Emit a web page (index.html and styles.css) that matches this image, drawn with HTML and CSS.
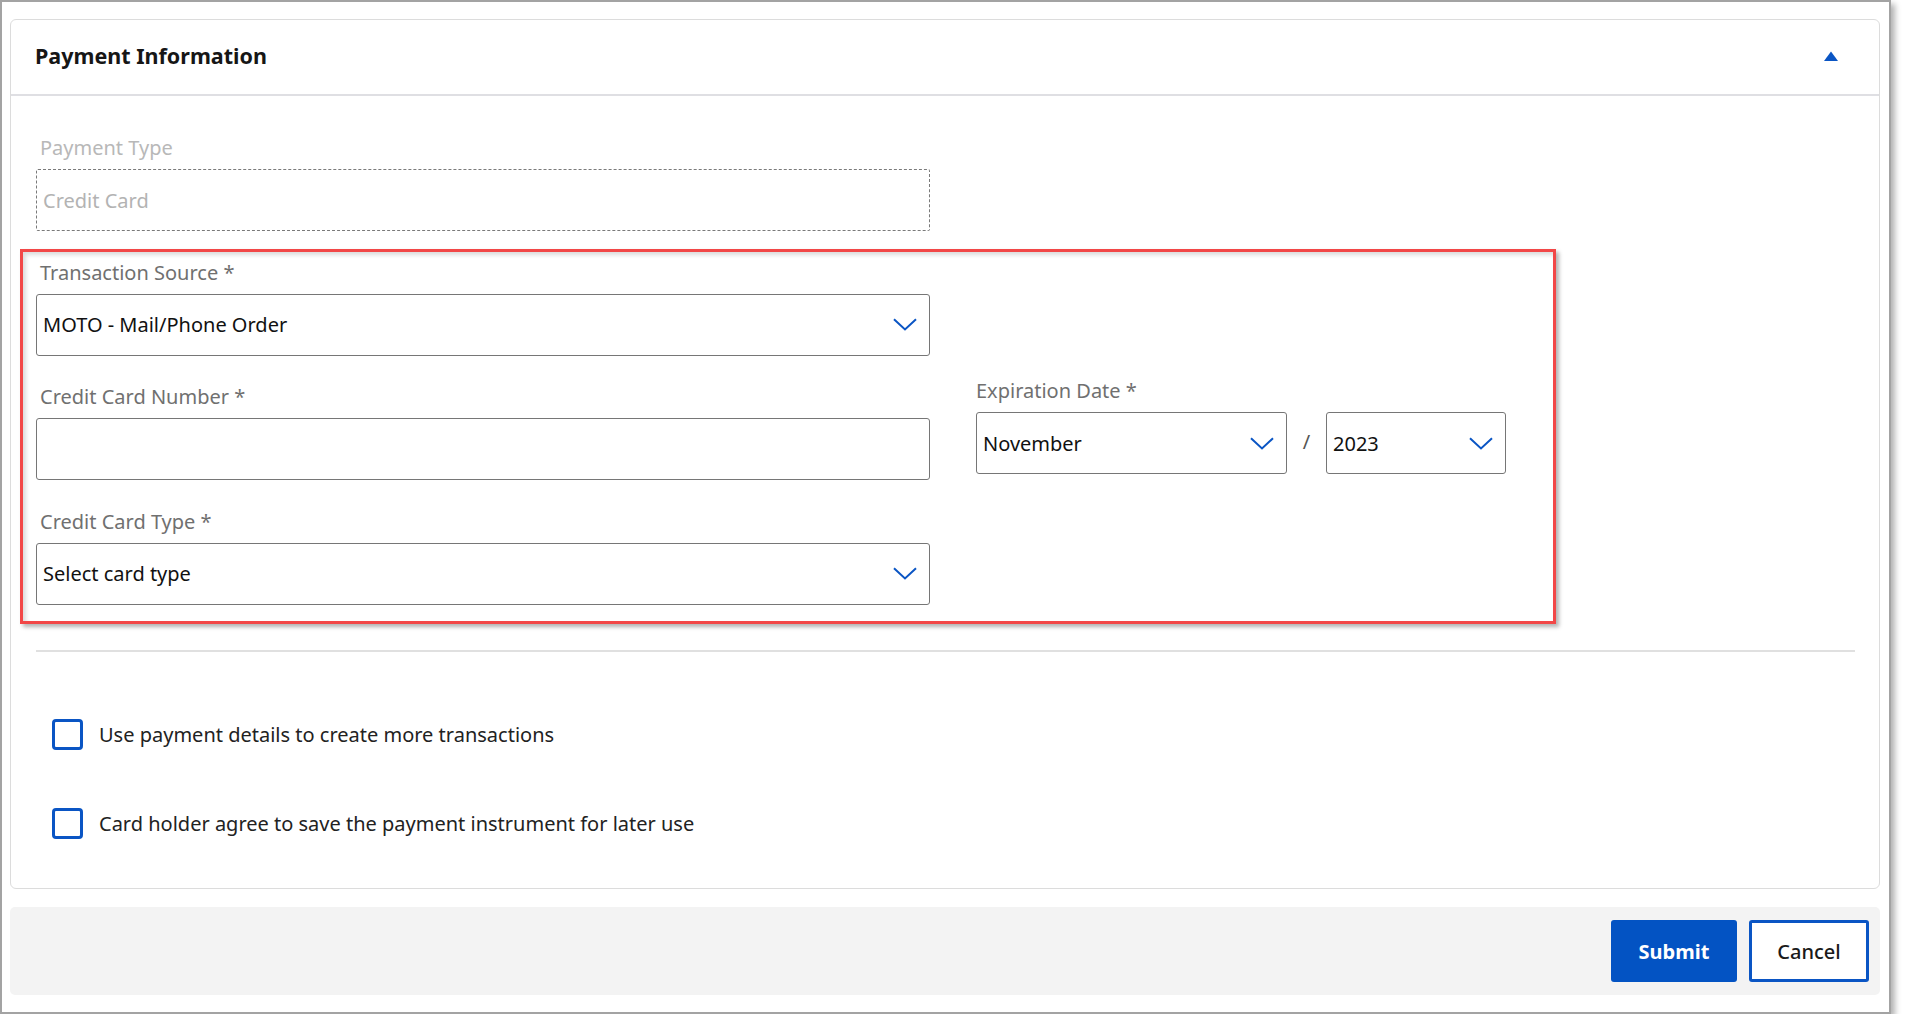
FILE: index.html
```html
<!DOCTYPE html>
<html lang="en">
<head>
<meta charset="utf-8">
<title>Payment Information</title>
<link rel="stylesheet" href="styles.css">
</head>
<body>
<div class="frame">
  <section class="card">
    <header class="card-head">
      <h2 class="card-title">Payment Information</h2>
      <svg class="collapse" width="14" height="10" viewBox="0 0 14 10"><polygon points="7,0.5 14,10 0,10" fill="#0a55c4"/></svg>
    </header>
    <div class="card-body">
      <div class="field">
        <label class="label label-disabled">Payment Type</label>
        <div class="box box-disabled">Credit Card</div>
      </div>

      <div class="highlight">
        <div class="grid">
          <div class="field">
            <label class="label">Transaction Source *</label>
            <div class="box select"><span>MOTO - Mail/Phone Order</span>
              <svg class="chev" width="24" height="13" viewBox="0 0 24 13"><polyline points="1,1.2 12,11.5 23,1.2" fill="none" stroke="#0a55c4" stroke-width="2"/></svg>
            </div>
          </div>
          <div></div>
          <div class="field">
            <label class="label">Credit Card Number *</label>
            <div class="box"></div>
          </div>
          <div class="field exp">
            <label class="label label-flush">Expiration Date *</label>
            <div class="exp-row">
              <div class="box select month"><span>November</span>
                <svg class="chev" width="24" height="13" viewBox="0 0 24 13"><polyline points="1,1.2 12,11.5 23,1.2" fill="none" stroke="#0a55c4" stroke-width="2"/></svg>
              </div>
              <span class="slash">/</span>
              <div class="box select year"><span>2023</span>
                <svg class="chev" width="24" height="13" viewBox="0 0 24 13"><polyline points="1,1.2 12,11.5 23,1.2" fill="none" stroke="#0a55c4" stroke-width="2"/></svg>
              </div>
            </div>
          </div>
          <div class="field">
            <label class="label">Credit Card Type *</label>
            <div class="box select"><span>Select card type</span>
              <svg class="chev" width="24" height="13" viewBox="0 0 24 13"><polyline points="1,1.2 12,11.5 23,1.2" fill="none" stroke="#0a55c4" stroke-width="2"/></svg>
            </div>
          </div>
        </div>
      </div>

      <hr class="divider">

      <div class="checks">
        <label class="check"><span class="checkbox"></span><span>Use payment details to create more transactions</span></label>
        <label class="check"><span class="checkbox"></span><span>Card holder agree to save the payment instrument for later use</span></label>
      </div>
    </div>
  </section>

  <footer class="actions">
    <button class="btn btn-primary">Submit</button>
    <button class="btn btn-secondary">Cancel</button>
  </footer>
</div>
</body>
</html>
```

FILE: styles.css
```css
* { box-sizing: border-box; }

html, body {
  margin: 0;
  background: #ffffff;
}

body {
  font-family: "Noto Sans", "Open Sans", sans-serif;
  color: #1a1a1a;
}

.frame {
  width: 1891px;
  height: 1014px;
  border: 2px solid #a3a3a3;
  box-shadow: 4px 4px 6px rgba(0, 0, 0, 0.3);
  padding: 17px 9px 15px 8px;
  background: #fff;
  display: flex;
  flex-direction: column;
}

.card {
  border: 1px solid #dcdcdc;
  border-radius: 6px;
  background: #fff;
}

.card-head {
  height: 76px;
  border-bottom: 2px solid #dfdfe3;
  display: flex;
  align-items: center;
  justify-content: space-between;
  padding: 0 41px 2px 24px;
}

.card-title {
  margin: 0;
  font-size: 21.5px;
  font-weight: 700;
  color: #161616;
  line-height: 30px;
}

.collapse { display: block; }

.card-body {
  padding: 38px 24px 49px 25px;
}

.field {
  display: flex;
  flex-direction: column;
}

.label {
  font-size: 20px;
  line-height: 28px;
  color: #707070;
  padding-left: 4px;
  margin-bottom: 7px;
}

.label-disabled { color: #b8b8b8; }
.label-flush { padding-left: 0; }

.box {
  width: 894px;
  height: 62px;
  border: 1px solid #767676;
  border-radius: 3px;
  background: #fff;
  font-size: 20px;
  color: #111;
  display: flex;
  align-items: center;
  padding: 0 12px 0 6px;
}

.box-disabled {
  border: 1px dashed #7a7a7a;
  color: #b3b3b3;
  border-radius: 2px;
}

.select {
  justify-content: space-between;
}

.chev { display: block; flex: none; }

.highlight {
  margin: 18px 0 0 -16px;
  width: 1536px;
  border: 3px solid #f24747;
  box-shadow: 3px 3px 4px rgba(0, 0, 0, 0.3), inset 3px 3px 4px rgba(0, 0, 0, 0.14);
  padding: 6.5px 0 16.5px 13px;
}

.grid {
  display: grid;
  grid-template-columns: 894px 530px;
  column-gap: 46px;
  row-gap: 27.5px;
}

.exp {
  margin-top: -6px;
}

.exp-row {
  display: flex;
  align-items: center;
}

.month { width: 311px; }
.year { width: 180px; }

.slash {
  width: 39px;
  text-align: center;
  font-size: 20px;
  color: #555;
  margin-top: -4px;
}

.divider {
  margin: 26px 0 0 0;
  border: 0;
  height: 2px;
  background: #e0e0e0;
}

.checks {
  padding: 67px 0 0 16px;
  display: flex;
  flex-direction: column;
  gap: 58px;
}

.check {
  display: flex;
  align-items: center;
  gap: 16px;
  font-size: 20px;
  color: #222;
  height: 31px;
}

.checkbox {
  width: 31px;
  height: 31px;
  border: 3px solid #0a55c4;
  border-radius: 4px;
  flex: none;
}

.actions {
  margin-top: 18px;
  height: 88px;
  background: #f3f3f3;
  border-radius: 5px;
  display: flex;
  justify-content: flex-end;
  align-items: center;
  gap: 12px;
  padding: 0 11px 0 0;
}

.btn {
  height: 62px;
  font-family: "Noto Sans", "Open Sans", sans-serif;
  font-size: 20px;
  border-radius: 3px;
  cursor: pointer;
}

.btn-primary {
  width: 126px;
  background: #0353c3;
  color: #fff;
  border: 0;
  font-weight: 700;
}

.btn-secondary {
  width: 120px;
  background: #fff;
  color: #1a1a1a;
  border: 3px solid #0a55c4;
  font-weight: 500;
}
```
